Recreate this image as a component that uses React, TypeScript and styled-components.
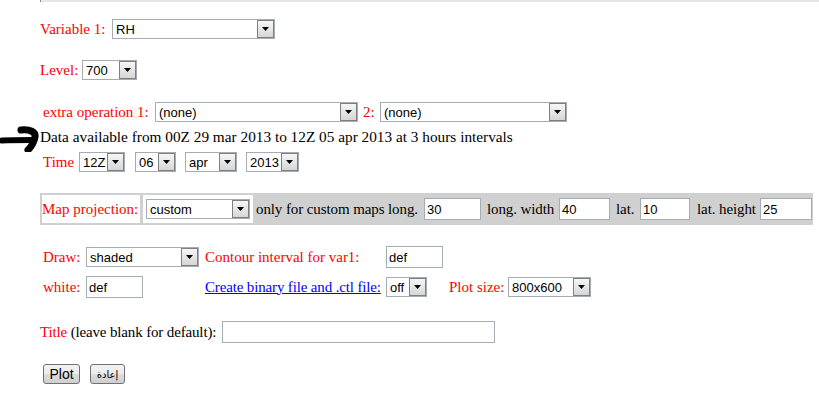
import React, {ReactElement} from 'react';
import styled, {createGlobalStyle} from 'styled-components';

const GlobalStyle = createGlobalStyle`
    body {
        margin: 0;
        background: #ffffff;
        font-family: "Liberation Serif", "Times New Roman", serif;
        font-size: 15px;
        color: #000000;
    }
`;

const colors = {
    red: '#ff0000',
    border: '#a5acb2',
    bar: '#d0d0d0',
    link: '#0000ff',
};

type SelectProps = {
    value: string;
    width: number;
    ml?: number;
};

function Select({value, width, ml = 0}: SelectProps): ReactElement {
    return (
        <SelectBox $width={width} $ml={ml}>
            <span className="value">{value}</span>
            <span className="drop">
                <svg width="7" height="4" viewBox="0 0 7 4">
                    <path d="M0 0h7L3.5 4z" fill="#000" />
                </svg>
            </span>
        </SelectBox>
    );
}

function Arrow(): ReactElement {
    return (
        <svg width="40" height="30" viewBox="0 0 40 30">
            <g fill="none" stroke="#000" strokeLinecap="round" strokeLinejoin="round">
                <path d="M2 18.5 C12 18 22 18 31 18" strokeWidth="6" />
                <path d="M21 8 C30 7 36 10 35 15 C34 21 31 25 28 28" strokeWidth="7" />
            </g>
        </svg>
    );
}

export default function App(): ReactElement {
    return (
        <>
            <GlobalStyle />
            <Page>
                <TopRule />
                <Row $mt={16}>
                    <Label $w={72}>Variable 1:</Label>
                    <Select value="RH" width={163} />
                </Row>
                <Row $mt={19}>
                    <Label $w={42}>Level:</Label>
                    <Select value="700" width={55} />
                </Row>
                <Row $mt={20} $indent={3}>
                    <Label $w={112}>extra operation 1:</Label>
                    <Select value="(none)" width={203} />
                    <Label $w={17} $ml={5}>2:</Label>
                    <Select value="(none)" width={187} />
                </Row>
                <DataRow>
                    <Arrow />
                    <span>Data available from 00Z 29 mar 2013 to 12Z 05 apr 2013 at 3 hours intervals</span>
                </DataRow>
                <Row $mt={4} $indent={3}>
                    <Label $w={36}>Time</Label>
                    <Select value="12Z" width={46} />
                    <Select value="06" width={41} ml={10} />
                    <Select value="apr" width={52} ml={9} />
                    <Select value="2013" width={53} ml={9} />
                </Row>
                <MapBar>
                    <Cell $w={98} $mr={3}>
                        <Label>Map projection:</Label>
                    </Cell>
                    <Cell $w={110} $pad={3}>
                        <Select value="custom" width={104} />
                    </Cell>
                    <BarText $w={171} $pl={3}>only for custom maps long.</BarText>
                    <TextInput $width={57} defaultValue="30" />
                    <BarText $w={78} $pl={6}>long. width</BarText>
                    <TextInput $width={51} defaultValue="40" />
                    <BarText $w={30} $pl={6}>lat.</BarText>
                    <TextInput $width={50} defaultValue="10" />
                    <BarText $w={70} $pl={7}>lat. height</BarText>
                    <TextInput $width={52} defaultValue="25" />
                </MapBar>
                <OptionsGrid>
                    <Label>Draw:</Label>
                    <Select value="shaded" width={113} />
                    <Label>Contour interval for var1:</Label>
                    <TextInput $width={57} defaultValue="def" />
                    <span />
                    <span />
                    <Label>white:</Label>
                    <TextInput $width={57} defaultValue="def" />
                    <Link href="#">Create binary file and .ctl file:</Link>
                    <Select value="off" width={41} />
                    <Label>Plot size:</Label>
                    <Select value="800x600" width={83} />
                </OptionsGrid>
                <Row $mt={23}>
                    <TitleLabel>
                        <Label>Title</Label> (leave blank for default):
                    </TitleLabel>
                    <TextInput $width={273} defaultValue="" />
                </Row>
                <Row $mt={20} $indent={3}>
                    <Button $w={37}>Plot</Button>
                    <Button $w={35} $small $ml={10}>إعادة</Button>
                </Row>
            </Page>
        </>
    );
}

const Page = styled.div`
    width: 819px;
    padding-left: 40px;
    box-sizing: border-box;
    display: flex;
    flex-flow: column nowrap;
`;

const TopRule = styled.div`
    height: 1px;
    background: #e6e6e6;
    border-left: 1px solid #8a8a8a;
    padding-bottom: 1px;
`;

const Row = styled.div<{$mt: number; $indent?: number}>`
    display: flex;
    align-items: center;
    height: 22px;
    margin-top: ${({$mt}): number => $mt}px;
    padding-left: ${({$indent}): number => $indent || 0}px;
    white-space: nowrap;
`;

const Label = styled.span<{$ml?: number; $w?: number}>`
    flex: none;
    color: ${colors.red};
    margin-left: ${({$ml}): number => $ml || 0}px;
    width: ${({$w}): string => ($w ? `${$w}px` : 'auto')};
`;

const TitleLabel = styled.span`
    flex: none;
    width: 182px;
    letter-spacing: -0.15px;
`;

const DataRow = styled.div`
    display: flex;
    align-items: center;
    height: 20px;
    margin-top: 4px;
    margin-left: -40px;
    font-size: 15.3px;
    white-space: nowrap;

    svg {
        flex: none;
        margin: -5px 0;
    }
`;

const SelectBox = styled.div<{$width: number; $ml: number}>`
    flex: none;
    box-sizing: border-box;
    width: ${({$width}): number => $width}px;
    height: 20px;
    margin-left: ${({$ml}): number => $ml}px;
    border: 1px solid ${colors.border};
    background: #ffffff;
    display: flex;
    align-items: center;
    font-family: "Liberation Sans", Arial, sans-serif;
    font-size: 13px;
    color: #000;

    .value {
        flex: 1;
        padding-left: 3px;
        overflow: hidden;
    }

    .drop {
        flex: none;
        box-sizing: border-box;
        width: 17px;
        height: 18px;
        border: 1px solid #7f7f7f;
        background: linear-gradient(#f6f6f6, #d6d6d6);
        display: flex;
        align-items: center;
        justify-content: center;
    }
`;

const MapBar = styled.div`
    display: flex;
    align-items: center;
    margin-top: 20px;
    width: 773px;
    height: 32px;
    box-sizing: border-box;
    padding: 2px 1px 2px 2px;
    background: ${colors.bar};
    white-space: nowrap;
`;

const Cell = styled.div<{$w: number; $pad?: number; $mr?: number}>`
    flex: none;
    box-sizing: border-box;
    width: ${({$w}): number => $w}px;
    align-self: stretch;
    display: flex;
    align-items: center;
    margin-right: ${({$mr}): number => $mr || 0}px;
    background: #ffffff;
    padding: 0 ${({$pad}): number => $pad || 0}px;
`;

const BarText = styled.span<{$w: number; $pl: number}>`
    flex: none;
    box-sizing: border-box;
    width: ${({$w}): number => $w}px;
    padding-left: ${({$pl}): number => $pl}px;
    letter-spacing: -0.1px;
`;

const TextInput = styled.input<{$width: number}>`
    flex: none;
    box-sizing: border-box;
    width: ${({$width}): number => $width}px;
    height: 22px;
    margin: 0;
    padding: 0 2px;
    border: 1px solid ${colors.border};
    font-family: "Liberation Sans", Arial, sans-serif;
    font-size: 13px;
    color: #000;
    outline: none;
`;

const OptionsGrid = styled.div`
    display: grid;
    grid-template-columns: 43px 119px 181px 63px 59px auto;
    grid-template-rows: 22px 22px;
    row-gap: 8px;
    align-items: center;
    justify-items: start;
    margin-top: 21px;
    padding-left: 3px;
    white-space: nowrap;
`;

const Link = styled.a`
    color: ${colors.link};
    text-decoration: underline;
    letter-spacing: -0.15px;
`;

const Button = styled.button<{$small?: boolean; $ml?: number; $w: number}>`
    box-sizing: border-box;
    width: ${({$w}): number => $w}px;
    height: 20px;
    margin-left: ${({$ml}): number => $ml || 0}px;
    padding: 0;
    border: 1px solid #707070;
    border-radius: 3px;
    background: linear-gradient(#f2f2f2 0%, #ebebeb 50%, #dddddd 51%, #cfcfcf 100%);
    font-family: "Liberation Sans", "DejaVu Sans", Arial, sans-serif;
    font-size: ${({$small}): number => ($small ? 10 : 14)}px;
    color: #000;
`;
